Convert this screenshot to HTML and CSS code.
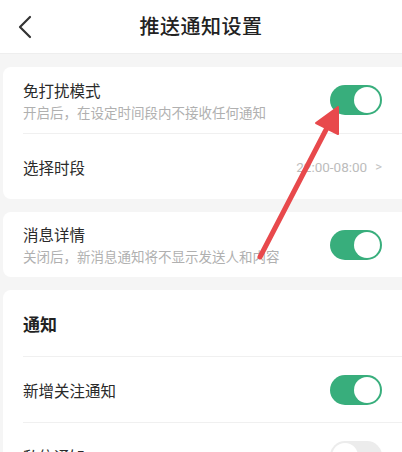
FILE: index.html
```html
<!DOCTYPE html>
<html lang="zh">
<head>
<meta charset="utf-8">
<link rel="stylesheet" href="styles.css">
</head>
<body>
<div class="page">
  <header class="topbar">
    <svg class="back" width="16" height="24" viewBox="0 0 16 24"><path d="M13 2 L3 12 L13 22" fill="none" stroke="#333" stroke-width="2.2" stroke-linecap="round" stroke-linejoin="round"/></svg>
    <h1 class="title">推送通知设置</h1>
  </header>
  <main class="content">
    <section class="card">
      <div class="row">
        <div class="texts">
          <div class="label">免打扰模式</div>
          <div class="desc">开启后，在设定时间段内不接收任何通知</div>
        </div>
        <span class="toggle on"><span class="knob"></span></span>
      </div>
      <div class="row">
        <div class="label">选择时段</div>
        <div class="value">22:00-08:00 <span class="chev">&gt;</span></div>
      </div>
    </section>
    <section class="card">
      <div class="row">
        <div class="texts">
          <div class="label">消息详情</div>
          <div class="desc">关闭后，新消息通知将不显示发送人和内容</div>
        </div>
        <span class="toggle on"><span class="knob"></span></span>
      </div>
    </section>
    <section class="card">
      <div class="row head">
        <div class="section-title">通知</div>
      </div>
      <div class="row">
        <div class="label">新增关注通知</div>
        <span class="toggle on"><span class="knob"></span></span>
      </div>
      <div class="row">
        <div class="label">私信通知</div>
        <span class="toggle off"><span class="knob"></span></span>
      </div>
    </section>
  </main>
  <svg class="arrow" width="402" height="452" viewBox="0 0 402 452">
    <line x1="260" y1="257" x2="329" y2="124" stroke="#e8494c" stroke-width="5" stroke-linecap="round"/>
    <polygon points="338,107 316,123 338,134" fill="#e8494c" stroke="#e8494c" stroke-width="2" stroke-linejoin="round"/>
  </svg>
</div>
</body>
</html>
```
FILE: styles.css
```css
* { box-sizing: border-box; }
html, body { margin: 0; padding: 0; }
body {
  background: #f5f5f5;
  font-family: "Noto Sans CJK SC", "Noto Sans", sans-serif;
  color: #222;
  width: 402px;
  height: 452px;
  overflow: hidden;
}
.page { position: relative; width: 402px; height: 452px; }
.topbar {
  height: 54px;
  background: #fff;
  display: flex;
  align-items: center;
  justify-content: center;
  position: relative;
  border-bottom: 1px solid #eee;
}
.back { position: absolute; left: 17px; top: 15px; }
.title {
  margin: 0;
  font-size: 20px;
  font-weight: 500;
  color: #222;
  letter-spacing: 0.5px;
  margin-top: -2px;
}
.content {
  padding: 13px 0 0 3px;
  display: flex;
  flex-direction: column;
  gap: 13px;
}
.card {
  background: #fff;
  border-radius: 8px 0 0 8px;
}
.row {
  height: 66px;
  margin-left: 20px;
  padding-right: 20px;
  display: flex;
  align-items: center;
  justify-content: space-between;
  border-top: 1px solid #f0f0f0;
}
.row:first-child { border-top: none; }
.card:nth-child(2) .row { height: 65px; }
.texts { display: flex; flex-direction: column; gap: 3px; }
.label { font-size: 15.5px; color: #2a2a2a; line-height: 20px; }
.desc { font-size: 13.5px; color: #b0b0b0; line-height: 18px; }
.section-title { font-size: 17px; font-weight: 700; color: #222; }
.value { font-size: 13.5px; color: #bcbcbc; display: flex; align-items: center; gap: 8px; font-family: "Roboto", "Noto Sans", sans-serif; margin-right: 0; }
.chev { font-size: 13px; color: #c4c4c4; }
.toggle {
  width: 52px;
  height: 30px;
  border-radius: 15px;
  display: flex;
  align-items: center;
  padding: 2px;
}
.toggle.on { background: #38ae7c; justify-content: flex-end; }
.toggle.off { background: #ececec; justify-content: flex-start; }
.knob {
  width: 26px;
  height: 26px;
  border-radius: 50%;
  background: #fff;
}
.arrow { position: absolute; left: 0; top: 0; pointer-events: none; }
```
